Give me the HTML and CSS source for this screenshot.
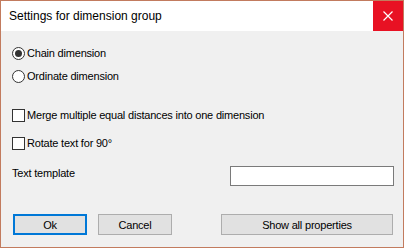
FILE: index.html
```html
<!DOCTYPE HTML>
<html>

<head>
    <title>Settings for dimension group</title>
    <meta name="viewport" content="width=device-width, initial-scale=1">
    <link rel="stylesheet" href="styles.css">
</head>

<body>
    <div class="window">
        <div class="titlebar">
            <span class="title">Settings for dimension group</span>
            <span class="close">
                <svg width="10" height="10" viewBox="0 0 10 10">
                    <path d="M0.5 0.5 L9.5 9.5 M9.5 0.5 L0.5 9.5" stroke="#fff" stroke-width="1.2" fill="none" />
                </svg>
            </span>
        </div>
        <div class="content">
            <div class="row radio-row">
                <span class="radio checked"></span>
                <span class="label">Chain dimension</span>
            </div>
            <div class="row radio-row second">
                <span class="radio"></span>
                <span class="label">Ordinate dimension</span>
            </div>
            <div class="row check-row">
                <span class="check"></span>
                <span class="label">Merge multiple equal distances into one dimension</span>
            </div>
            <div class="row check-row second-check">
                <span class="check"></span>
                <span class="label">Rotate text for 90°</span>
            </div>
            <div class="row template-row">
                <span class="template-label">Text template</span>
                <span class="textbox"></span>
            </div>
            <div class="row button-row">
                <span class="button focused">Ok</span>
                <span class="button">Cancel</span>
                <span class="button wide">Show all properties</span>
            </div>
        </div>
    </div>
</body>

</html>
```

FILE: styles.css
```css
html {
    font-family: "Liberation Sans", Arial, sans-serif;
    font-size: 11px;
    letter-spacing: -0.2px;
    color: #000;
}

body {
    margin: 0;
}

.window {
    width: 404px;
    height: 248px;
    box-sizing: border-box;
    border: 1px solid #c27b5e;
    background-color: #f0f0f0;
    display: flex;
    flex-direction: column;
}

.titlebar {
    height: 30px;
    background-color: #fff;
    display: flex;
    align-items: center;
}

.title {
    flex: 1;
    padding-left: 8px;
    font-size: 12px;
    letter-spacing: 0;
}

.close {
    width: 30px;
    height: 30px;
    background-color: #e81123;
    display: flex;
    align-items: center;
    justify-content: center;
}

.content {
    padding: 12px 9px 0 11px;
}

.row {
    display: flex;
    align-items: center;
}

.radio-row,
.check-row {
    height: 20px;
}

.radio-row.second {
    margin-top: 3px;
}

.check-row {
    margin-top: 19px;
}

.check-row.second-check {
    margin-top: 8px;
}

.radio {
    width: 13px;
    height: 13px;
    box-sizing: border-box;
    border: 1px solid #333;
    border-radius: 50%;
    background-color: #fff;
    display: flex;
    align-items: center;
    justify-content: center;
}

.radio.checked::after {
    content: "";
    width: 7px;
    height: 7px;
    border-radius: 50%;
    background-color: #333;
}

.check {
    width: 13px;
    height: 13px;
    box-sizing: border-box;
    border: 1px solid #333;
    background-color: #fff;
}

.label {
    padding-left: 2px;
}

.template-row {
    margin-top: 13px;
    align-items: flex-start;
    justify-content: space-between;
}

.template-label {
    line-height: 14px;
}

.textbox {
    width: 164px;
    height: 20px;
    box-sizing: border-box;
    border: 1px solid #7a7a7a;
    background-color: #fff;
}

.button-row {
    margin-top: 28px;
    padding-left: 1px;
    padding-right: 1px;
}

.button {
    width: 74px;
    height: 21px;
    box-sizing: border-box;
    border: 1px solid #adadad;
    background-color: #e1e1e1;
    display: flex;
    align-items: center;
    justify-content: center;
    margin-right: 11px;
}

.button.focused {
    border: 2px solid #0078d7;
}

.button.wide {
    width: 172px;
    margin-left: auto;
    margin-right: 0;
}
```
